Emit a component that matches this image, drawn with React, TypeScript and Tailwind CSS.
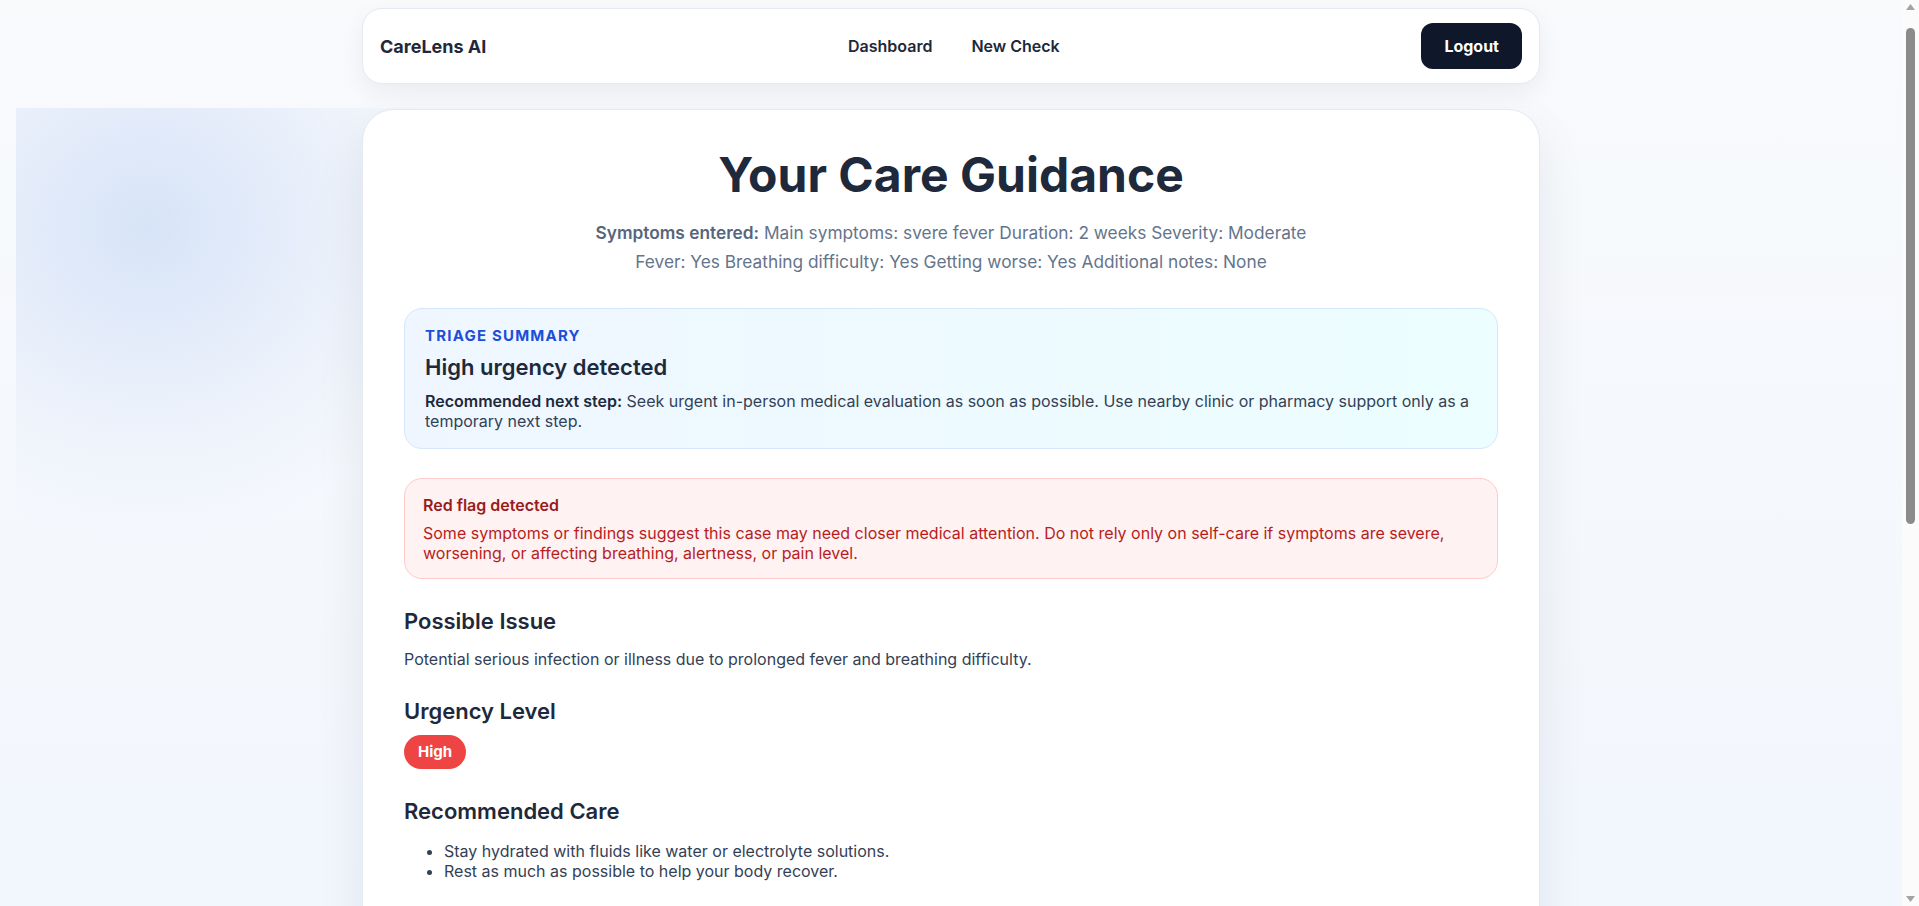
const recommendedCare = [
  "Stay hydrated with fluids like water or electrolyte solutions.",
  "Rest as much as possible to help your body recover.",
];

const warningSigns = [
  "Shortness of breath that gets worse or happens while resting.",
  "Chest pain, confusion, or trouble staying awake.",
  "Fever above 39.5°C (103°F) that does not come down with medication.",
];

const selfCare = [
  "Monitor your temperature every few hours and keep a simple log.",
  "Use fever-reducing medication only as directed on the label.",
  "Avoid strenuous activity until you have been evaluated.",
];

const nearbyOptions = [
  "Urgent care clinic for same-day in-person evaluation.",
  "Local pharmacy for advice on over-the-counter symptom relief.",
  "Telehealth consultation if you cannot travel right away.",
];

function SectionTitle({ children }: { children: React.ReactNode }) {
  return <h2 className="mt-[28px] text-[22px] font-semibold leading-[28px] text-[#1e293b]">{children}</h2>;
}

function BulletList({ items }: { items: string[] }) {
  return (
    <ul className="mt-[16px] list-disc pl-[40px] text-[16px] leading-[20px] text-[#334155]">
      {items.map((item) => (
        <li key={item}>{item}</li>
      ))}
    </ul>
  );
}

function Scrollbar() {
  return (
    <aside className="flex h-screen w-[17px] shrink-0 flex-col items-center bg-[#fbfbfb]">
      <svg width="9" height="6" viewBox="0 0 9 6" className="mt-[4px] shrink-0">
        <path d="M4.5 0 L9 6 L0 6 Z" fill="#a3a3a3" />
      </svg>
      <div className="mt-[18px] h-[496px] w-[9px] rounded-full bg-[#8b8b8b]" />
      <div className="flex-1" />
      <svg width="9" height="6" viewBox="0 0 9 6" className="mb-[4px] shrink-0">
        <path d="M0 0 L9 0 L4.5 6 Z" fill="#a3a3a3" />
      </svg>
    </aside>
  );
}

export default function App() {
  return (
    <div className="flex h-screen overflow-hidden font-['Inter',sans-serif] text-[#1e293b]">
      <div className="h-screen flex-1 overflow-y-auto bg-[linear-gradient(180deg,#f8fafc_0%,#f2f6fd_100%)] [scrollbar-width:none]">
        <div className="relative min-h-full overflow-hidden px-4 pb-[32px] pt-[8px]">
          <div className="pointer-events-none absolute left-[16px] top-[108px] h-[440px] w-[460px] bg-[radial-gradient(ellipse_330px_310px_at_131px_118px,#d7e4f7_0%,#e1eaf9_30%,#ebf1fb_58%,rgba(244,247,252,0)_100%)]" />

          <nav className="relative mx-auto flex w-[1178px] items-center justify-between rounded-[20px] border border-[#e5e9f0] bg-white px-[17px] py-[14px] shadow-[0_8px_24px_rgba(15,23,42,0.06)]">
            <span className="text-[18px] font-bold text-[#1e293b]">CareLens AI</span>
            <div className="flex items-center gap-[39px] text-[16px] font-semibold text-[#1e293b]">
              <a href="#">Dashboard</a>
              <a href="#">New Check</a>
            </div>
            <button className="h-[46px] rounded-[12px] bg-[#0f172a] px-[23px] text-[16px] font-bold text-white">
              Logout
            </button>
          </nav>

          <main className="relative mx-auto mt-[25px] w-[1178px] rounded-[32px] border border-[#e5e9f0] bg-white px-[41px] pb-[44px] pt-[36px] shadow-[0_20px_50px_rgba(15,23,42,0.08)]">
            <h1 className="text-center text-[48px] font-bold leading-[1.2] text-[#1e293b]">Your Care Guidance</h1>
            <p className="mx-auto mt-[14px] max-w-[750px] text-center text-[17.3px] leading-[29px] text-[#64748b]">
              <span className="font-semibold text-[#56667d]">Symptoms entered:</span> Main symptoms: svere fever Duration: 2
              weeks Severity: Moderate Fever: Yes Breathing difficulty: Yes Getting worse: Yes Additional notes: None
            </p>

            <section className="mt-[32px] rounded-[18px] border border-[#d6e6fb] bg-[linear-gradient(90deg,#eff6ff_0%,#ecfeff_100%)] px-[20px] pb-[17px] pt-[17px]">
              <p className="text-[15px] font-bold uppercase leading-[20px] tracking-[0.08em] text-[#1d4ed8]">Triage Summary</p>
              <h3 className="mt-[7px] text-[22px] font-semibold leading-[28px] text-[#1e293b]">High urgency detected</h3>
              <p className="mt-[10px] text-[16px] leading-[20px] text-[#334155]">
                <span className="font-semibold text-[#1e293b]">Recommended next step:</span> Seek urgent in-person medical
                evaluation as soon as possible. Use nearby clinic or pharmacy support only as a temporary next step.
              </p>
            </section>

            <section className="mt-[29px] rounded-[18px] border border-[#fecaca] bg-[#fef2f2] px-[18px] pb-[15px] pt-[16px]">
              <p className="text-[16px] font-semibold leading-[20px] text-[#991b1b]">Red flag detected</p>
              <p className="mt-[8px] text-[16px] leading-[20px] text-[#b91c1c]">
                Some symptoms or findings suggest this case may need closer medical attention. Do not rely only on self-care if
                symptoms are severe, worsening, or affecting breathing, alertness, or pain level.
              </p>
            </section>

            <SectionTitle>Possible Issue</SectionTitle>
            <p className="mt-[14px] text-[16px] leading-[20px] text-[#334155]">
              Potential serious infection or illness due to prolonged fever and breathing difficulty.
            </p>

            <SectionTitle>Urgency Level</SectionTitle>
            <div className="mt-[10px]">
              <span className="inline-block rounded-full bg-[#ef4444] px-[14px] py-[7px] text-[15px] font-bold leading-[20px] text-white">
                High
              </span>
            </div>

            <SectionTitle>Recommended Care</SectionTitle>
            <BulletList items={recommendedCare} />

            <SectionTitle>Warning Signs to Watch</SectionTitle>
            <BulletList items={warningSigns} />

            <SectionTitle>Self-Care While You Wait</SectionTitle>
            <BulletList items={selfCare} />

            <SectionTitle>Nearby Care Options</SectionTitle>
            <BulletList items={nearbyOptions} />

            <SectionTitle>When to See a Doctor</SectionTitle>
            <p className="mt-[14px] text-[16px] leading-[20px] text-[#334155]">
              A fever lasting two weeks together with breathing difficulty should be checked by a clinician as soon as
              possible, even if the symptoms seem to improve for a short time.
            </p>

            <div className="mt-[28px] rounded-[18px] border border-[#e2e8f0] bg-[#f8fafc] px-[18px] py-[16px] text-[14px] leading-[20px] text-[#64748b]">
              CareLens AI provides general guidance only and is not a substitute for professional medical advice, diagnosis,
              or treatment. If you think you may have a medical emergency, contact your local emergency number immediately.
            </div>

            <div className="mt-[28px] flex gap-[12px]">
              <button className="h-[46px] rounded-[12px] bg-[#0f172a] px-[22px] text-[16px] font-bold text-white">
                Start New Check
              </button>
              <button className="h-[46px] rounded-[12px] border border-[#e2e8f0] bg-white px-[22px] text-[16px] font-semibold text-[#1e293b]">
                Back to Dashboard
              </button>
            </div>
          </main>
        </div>
      </div>
      <Scrollbar />
    </div>
  );
}
